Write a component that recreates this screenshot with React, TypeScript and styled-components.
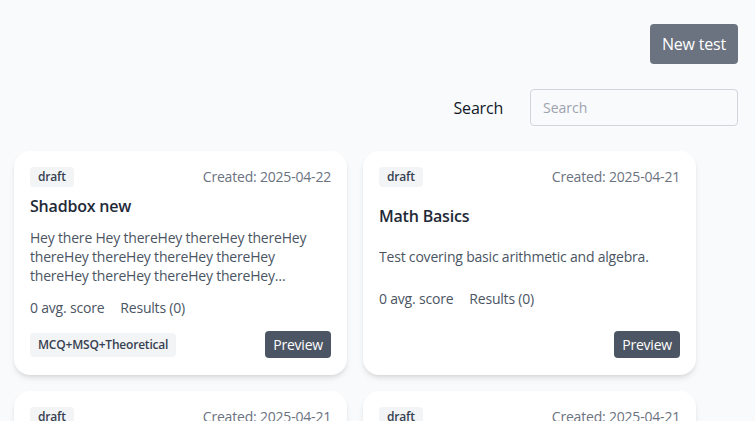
import * as React from 'react';
import styled, { createGlobalStyle } from 'styled-components';

const GlobalStyle = createGlobalStyle`
    * { box-sizing: border-box; }
    body {
        margin: 0;
        background: #f9fafb;
        font-family: 'Open Sans', 'Noto Sans', sans-serif;
        letter-spacing: -0.2px;
    }
`

const Page = styled.div`
    padding: 24px 17px 0 14px;
    height: 421px;
    overflow: hidden;
`

const TopBar = styled.div`
    display: flex;
    justify-content: flex-end;
`

const NewButton = styled.button`
    height: 40px;
    padding: 0 12px;
    background: #6b7280;
    color: #ffffff;
    border: none;
    border-radius: 4px;
    font-family: inherit;
    letter-spacing: inherit;
    font-size: 16px;
`

const SearchRow = styled.div`
    display: flex;
    justify-content: flex-end;
    align-items: center;
    gap: 27px;
    margin-top: 25px;
`

const SearchLabel = styled.label`
    font-size: 16px;
    font-weight: 500;
    color: #111827;
`

const SearchInput = styled.input`
    width: 208px;
    height: 37px;
    padding: 0 12px;
    border: 1px solid #d1d5db;
    border-radius: 4px;
    background: #f9fafb;
    font-family: inherit;
    font-size: 14px;
    &::placeholder { color: #9ca3af; }
`

const Grid = styled.div`
    display: grid;
    grid-template-columns: repeat(2, 333px);
    gap: 16px;
    margin-top: 25px;
`

const Card = styled.div`
    background: #ffffff;
    border-radius: 16px;
    box-shadow: 0 4px 6px -1px rgba(0,0,0,0.1), 0 2px 4px -2px rgba(0,0,0,0.1);
    padding: 16px 16px 17px;
    display: flex;
    flex-direction: column;
    justify-content: space-between;
`

const Header = styled.div`
    display: flex;
    justify-content: space-between;
    align-items: center;
    height: 20px;
`

const Tag = styled.span`
    background: #f3f4f6;
    color: #374151;
    font-size: 12px;
    font-weight: 600;
    padding: 2px 8px;
    border-radius: 4px;
    line-height: 16px;
`

const Created = styled.span`
    font-size: 14px;
    line-height: 20px;
    color: #6b7280;
`

const Title = styled.h3`
    margin: 7px 0 0;
    font-size: 16px;
    font-weight: 600;
    line-height: 24px;
    color: #1f2937;
`

const Description = styled.p`
    margin: 10px 0 0;
    font-size: 14px;
    line-height: 19px;
    max-height: 57px;
    color: #4b5563;
    overflow: hidden;
`

const Stats = styled.div`
    margin-top: 13px;
    display: flex;
    gap: 16px;
    font-size: 14px;
    line-height: 20px;
    color: #4b5563;
`

const Footer = styled.div`
    margin-top: 13px;
    display: flex;
    justify-content: space-between;
    align-items: center;
    height: 27px;
`

const TypeTag = styled(Tag)`
    padding: 4px 8px;
`

const PreviewButton = styled.button`
    margin-left: auto;
    height: 27px;
    padding: 0 8px;
    background: #4b5563;
    color: #ffffff;
    border: none;
    border-radius: 4px;
    font-family: inherit;
    letter-spacing: inherit;
    font-size: 14px;
`

interface Test {
    title: string,
    created: string,
    description: string,
    type?: string,
}

// cut long descriptions to what fits in three lines
const truncate = (text: string, max: number) =>
    text.length > max ? text.slice(0, max) + '…' : text

const tests: Test[] = [
    {
        title: 'Shadbox new',
        created: '2025-04-22',
        description: 'Hey there Hey thereHey thereHey thereHey thereHey thereHey thereHey thereHey thereHey thereHey thereHey thereHey thereHey thereHey',
        type: 'MCQ+MSQ+Theoretical',
    },
    {
        title: 'Math Basics',
        created: '2025-04-21',
        description: 'Test covering basic arithmetic and algebra.',
    },
    {
        title: 'Science Quiz',
        created: '2025-04-21',
        description: 'General science questions.',
    },
    {
        title: 'History',
        created: '2025-04-21',
        description: 'World history test.',
    },
]

const TestCard: React.FC<{ test: Test }> = ({ test }) => (
    <Card>
        <Header>
            <Tag>draft</Tag>
            <Created>Created: {test.created}</Created>
        </Header>
        <Title>{test.title}</Title>
        <Description>{truncate(test.description, 112)}</Description>
        <Stats>
            <span>0 avg. score</span>
            <span>Results (0)</span>
        </Stats>
        <Footer>
            {test.type && <TypeTag>{test.type}</TypeTag>}
            <PreviewButton>Preview</PreviewButton>
        </Footer>
    </Card>
)

const App: React.FC = () => {
    return (
        <Page>
            <GlobalStyle />
            <TopBar>
                <NewButton>New test</NewButton>
            </TopBar>
            <SearchRow>
                <SearchLabel>Search</SearchLabel>
                <SearchInput placeholder="Search" />
            </SearchRow>
            <Grid>
                {tests.map(t => <TestCard key={t.title} test={t} />)}
            </Grid>
        </Page>
    );
};

export default App;
